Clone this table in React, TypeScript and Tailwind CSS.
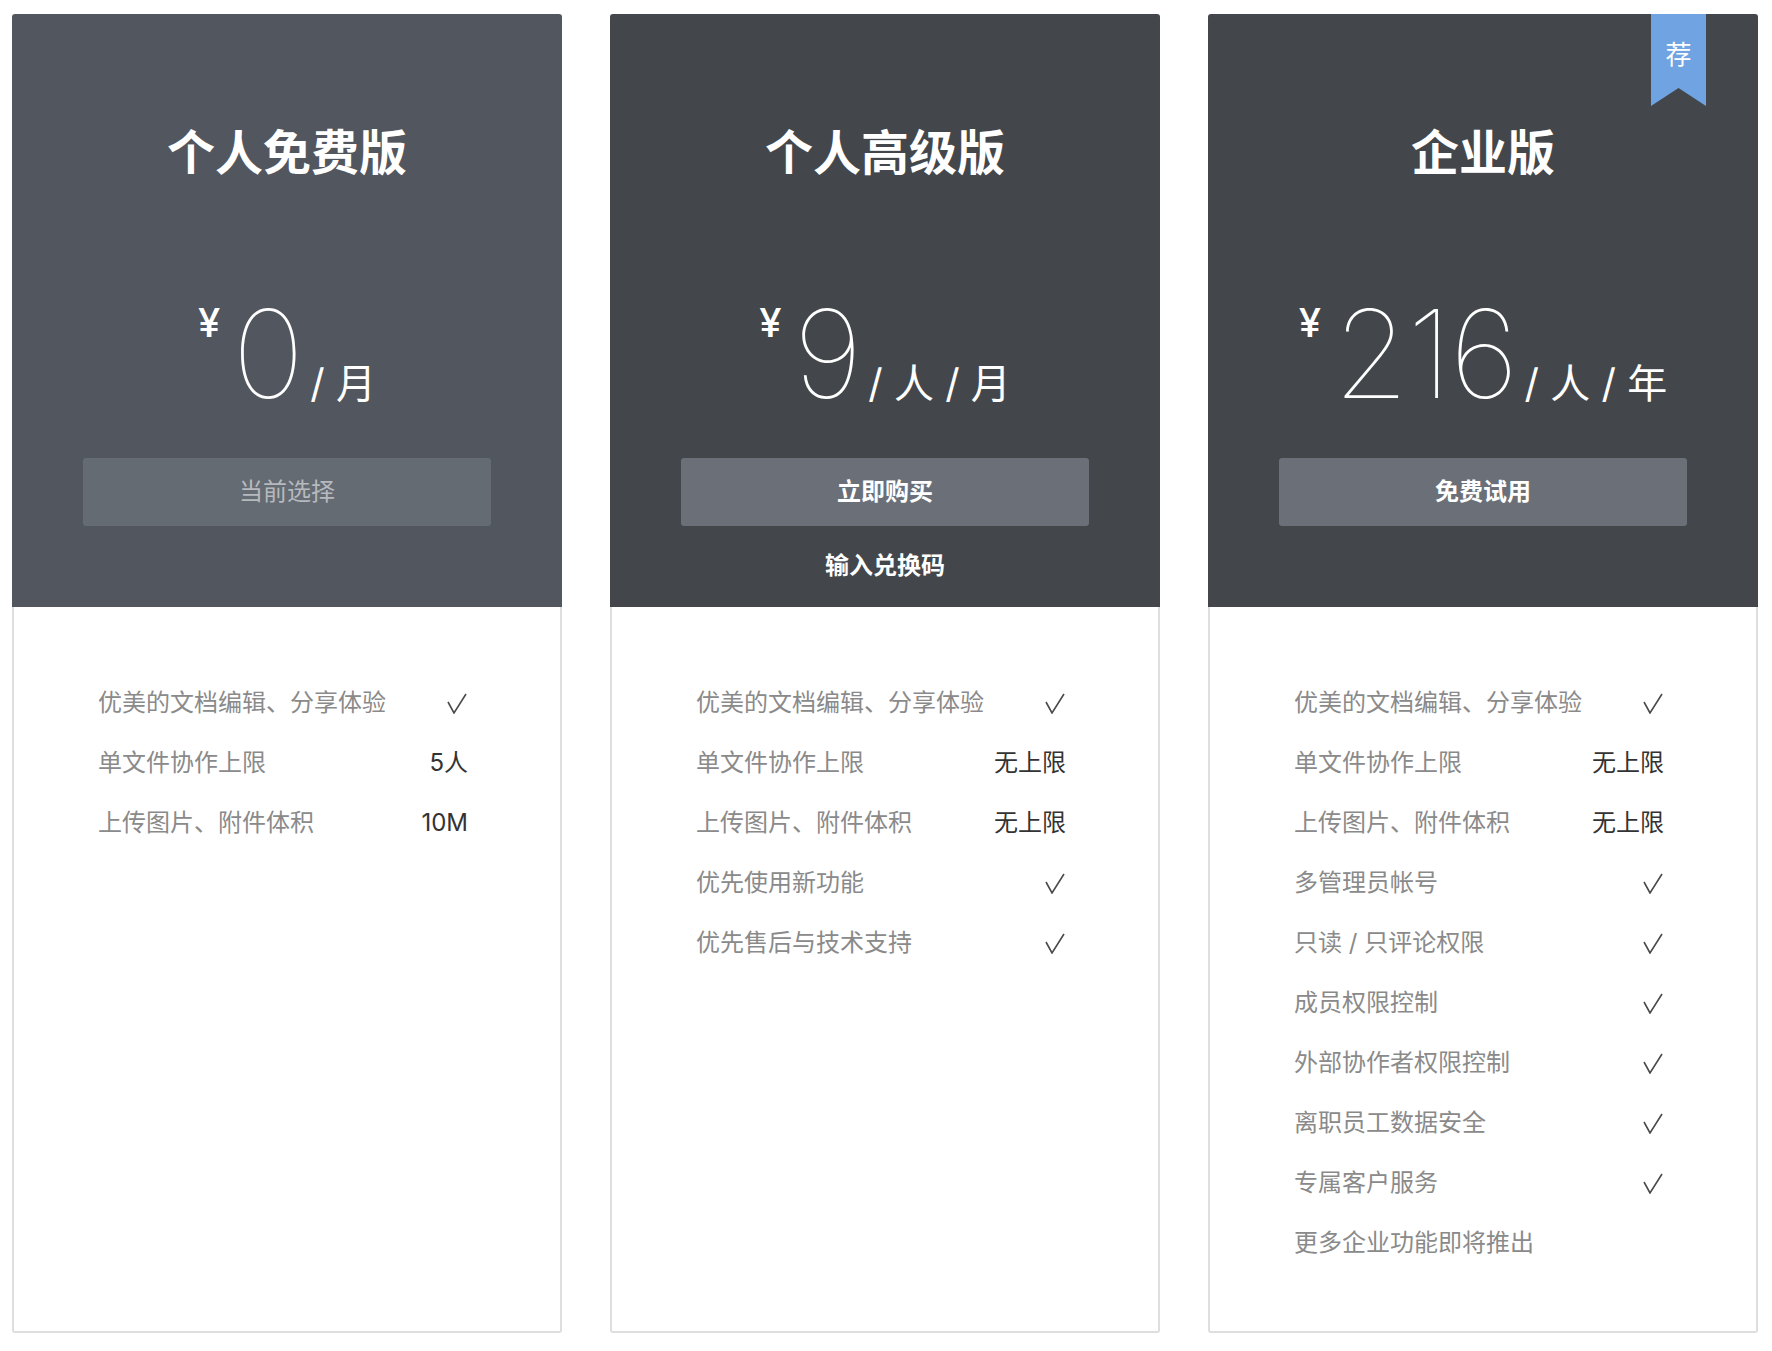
import React from "react";

type Feature = [string, string];

const plans: {
  title: string;
  amount: string;
  suffix: string;
  button: string;
  light: boolean;
  extra?: string;
  ribbon?: boolean;
  features: Feature[];
}[] = [
  {
    title: "个人免费版",
    amount: "0",
    suffix: "/ 月",
    button: "当前选择",
    light: true,
    features: [
      ["优美的文档编辑、分享体验", "√"],
      ["单文件协作上限", "5人"],
      ["上传图片、附件体积", "10M"],
    ],
  },
  {
    title: "个人高级版",
    amount: "9",
    suffix: "/ 人 / 月",
    button: "立即购买",
    light: false,
    extra: "输入兑换码",
    features: [
      ["优美的文档编辑、分享体验", "√"],
      ["单文件协作上限", "无上限"],
      ["上传图片、附件体积", "无上限"],
      ["优先使用新功能", "√"],
      ["优先售后与技术支持", "√"],
    ],
  },
  {
    title: "企业版",
    amount: "216",
    suffix: "/ 人 / 年",
    button: "免费试用",
    light: false,
    ribbon: true,
    features: [
      ["优美的文档编辑、分享体验", "√"],
      ["单文件协作上限", "无上限"],
      ["上传图片、附件体积", "无上限"],
      ["多管理员帐号", "√"],
      ["只读 / 只评论权限", "√"],
      ["成员权限控制", "√"],
      ["外部协作者权限控制", "√"],
      ["离职员工数据安全", "√"],
      ["专属客户服务", "√"],
      ["更多企业功能即将推出", ""],
    ],
  },
];

const font = { fontFamily: 'Inter, "Noto Sans CJK SC", sans-serif' };

function Check() {
  return (
    <svg width="20" height="21" viewBox="0 0 20 21" className="mr-[1px]">
      <polyline
        points="1,9 7,20 19,1"
        fill="none"
        stroke="#4a4a4a"
        strokeWidth="1.6"
        strokeLinejoin="miter"
      />
    </svg>
  );
}

export default function App() {
  return (
    <div
      className="min-h-[1351px] w-[1772px] bg-white pl-[12px] pt-[14px]"
      style={font}
    >
      <div className="flex gap-[48px]">
        {plans.map((p) => (
          <div key={p.title} className="relative flex h-[1319px] w-[550px] flex-col">
            <div
              className={`relative flex h-[593px] flex-col items-center rounded-t-[3px] ${
                p.light ? "bg-[#52565e]" : "bg-[#43474c]"
              }`}
            >
              {p.ribbon && (
                <div className="absolute right-[52px] top-0 flex h-[92px] w-[55px] justify-center bg-[#6fa3e1] pt-[27px] [clip-path:polygon(0_0,100%_0,100%_100%,50%_80.4%,0_100%)]">
                  <span className="text-[26px] leading-[28px] text-white">荐</span>
                </div>
              )}
              <div className="pt-[115px] text-[48px] font-bold leading-[48px] text-white">
                {p.title}
              </div>
              <div className="mt-[116px] flex h-[122px] items-baseline text-white">
                <span className="mr-[12px] self-start pt-[10px] text-[40px] font-medium leading-[40px]">
                  ¥
                </span>
                <span className="text-[122px] font-thin leading-[122px] tracking-[-2px]">
                  {p.amount}
                </span>
                <span className="ml-[8px] whitespace-pre text-[40px] leading-[40px]">
                  {p.suffix}
                </span>
              </div>
              <div
                className={`mt-[43px] flex h-[68px] w-[408px] items-center justify-center rounded-[3px] text-[24px] ${
                  p.light
                    ? "bg-[#656b73] text-[#b6b9bd]"
                    : "bg-[#6b7078] font-bold text-white"
                }`}
              >
                {p.button}
              </div>
              {p.extra && (
                <div className="mt-[23px] text-[24px] font-bold leading-[34px] text-white">
                  {p.extra}
                </div>
              )}
            </div>
            <div className="flex flex-1 flex-col rounded-b-[3px] border-x-2 border-b-2 border-[#dedede] pl-[84px] pr-[92px] pt-[66px]">
              {p.features.map(([k, v]) => (
                <div key={k} className="flex h-[60px] items-center justify-between text-[24px]">
                  <span className="text-[#8a8a8a]">{k}</span>
                  {v === "√" ? <Check /> : <span className="text-[#333]">{v}</span>}
                </div>
              ))}
            </div>
          </div>
        ))}
      </div>
    </div>
  );
}
